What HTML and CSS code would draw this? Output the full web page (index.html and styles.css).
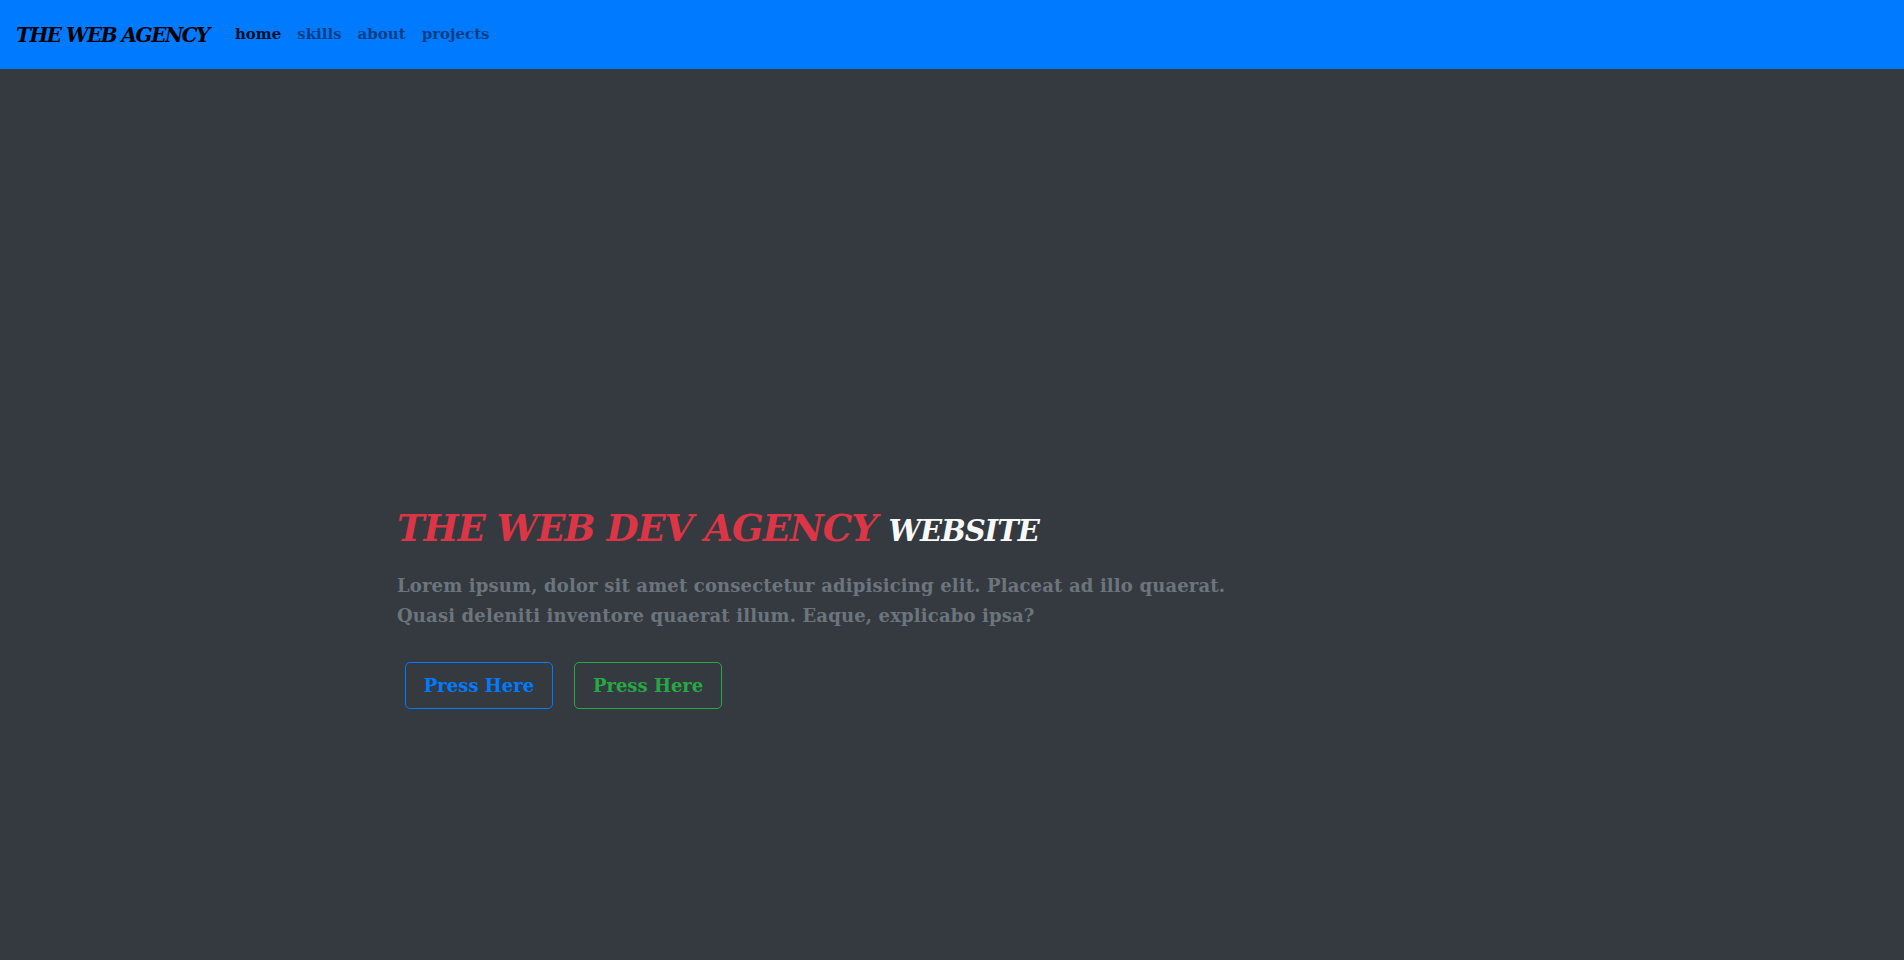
FILE: index.html
```html
<!DOCTYPE html>
<html lang="en">
<head>
    <meta charset="UTF-8">
    <meta name="viewport" content="width=device-width, initial-scale=1.0">
    <title>The Web Agency</title>
    <link rel="stylesheet" href="styles.css">
</head>
<body>

    <!-- Top navigation -->
    <nav class="navbar">
        <a class="brand" href="#">THE WEB AGENCY</a>
        <ul class="nav-links">
            <li><a class="active" href="#">home</a></li>
            <li><a href="#">skills</a></li>
            <li><a href="#">about</a></li>
            <li><a href="#">projects</a></li>
        </ul>
    </nav>

    <!-- Hero -->
    <section class="hero">
        <div class="container">
            <h1><span class="title-red">THE WEB DEV AGENCY</span> <span class="title-small">WEBSITE</span></h1>
            <p class="lead">Lorem ipsum, dolor sit amet consectetur adipisicing elit. Placeat ad illo quaerat. Quasi deleniti inventore quaerat illum. Eaque, explicabo ipsa?</p>
            <div class="buttons">
                <a class="btn btn-blue" href="#">Press Here</a>
                <a class="btn btn-green" href="#">Press Here</a>
            </div>
        </div>
    </section>

</body>
</html>
```

FILE: styles.css
```css
body {
    font-family: "DejaVu Serif", serif;
    background-color: #343a40;
    margin: 0;
    padding: 0;
    min-height: 100vh;
}
a {
    text-decoration: none;
}
.navbar {
    background-color: #007bff;
    height: 69px;
    padding: 0 16px;
    display: flex;
    align-items: center;
}
.brand {
    font-size: 20px;
    font-weight: bold;
    font-style: italic;
    color: #000;
    margin-right: 18px;
    letter-spacing: -1.5px;
}
.nav-links {
    list-style: none;
    display: flex;
    margin: 0;
    padding: 0;
    position: relative;
    top: -1px;
}
.nav-links a {
    display: block;
    padding: 8px 8px;
    font-size: 15px;
    font-weight: bold;
    color: rgba(0,0,0,0.5);
}
.nav-links a.active {
    color: rgba(0,0,0,0.9);
}
.hero {
    padding-top: 437px;
}
.container {
    max-width: 1110px;
    margin: 0 auto;
    padding: 0 15px;
}
h1 {
    margin: 0 0 21px 0;
    font-size: 37px;
    font-style: italic;
    font-weight: bold;
    line-height: 1.2;
    letter-spacing: -1px;
}
.title-red {
    color: #dc3545;
}
.title-small {
    color: #f8f9fa;
    font-size: 29px;
}
.lead {
    margin: 0 0 16px 0;
    max-width: 840px;
    font-size: 18px;
    font-weight: bold;
    line-height: 30px;
    letter-spacing: 0.15px;
    color: #6c757d;
}
.buttons {
    padding-top: 7px;
}
.btn {
    display: inline-block;
    margin: 8px;
    width: 148px;
    box-sizing: border-box;
    padding: 8px 0;
    text-align: center;
    font-size: 18px;
    font-weight: bold;
    line-height: 29px;
    border: 1px solid;
    border-radius: 5px;
    background: transparent;
}
.btn-blue {
    color: #007bff;
    border-color: #007bff;
}
.btn-green {
    color: #28a745;
    border-color: #28a745;
}
```
